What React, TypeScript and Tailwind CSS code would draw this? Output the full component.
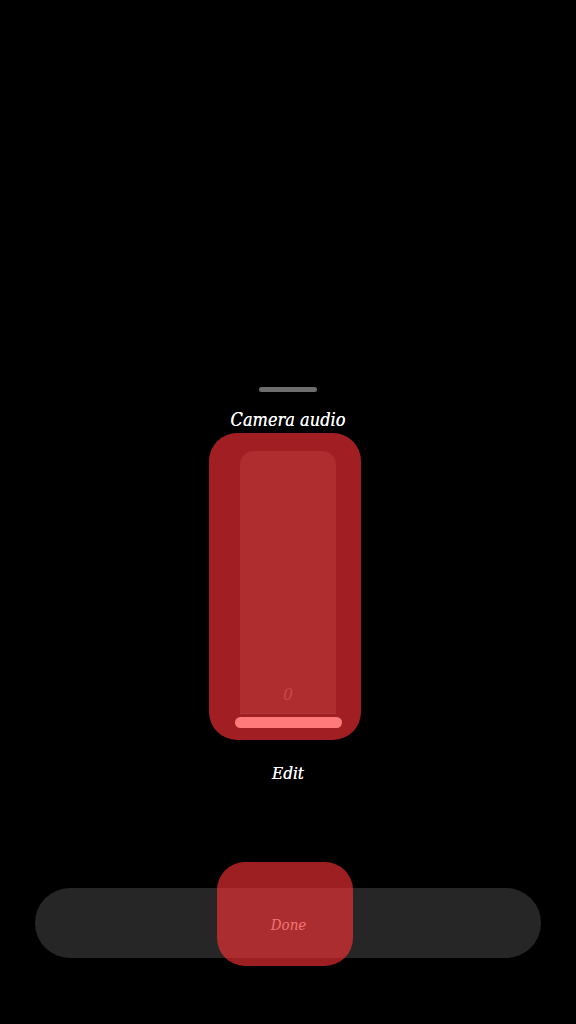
import React from 'react';

const serif = { fontFamily: '"DejaVu Serif", "Liberation Serif", serif', fontStretch: 'condensed' as const };

/** Vertical level slider shown in the audio sheet. */
function LevelSlider({ value }: { value: number }) {
  return (
    <div className="flex h-[307px] w-[152px] flex-col rounded-[28px] bg-[#a11f22] pb-[12px] pl-[26px] pr-[19px] pt-[18px]">
      <div className="ml-[5px] flex w-[96px] flex-1 flex-col items-center justify-end rounded-t-[14px] border-b border-dotted border-[#c4484a]/60 bg-[#b02d2f] pb-[10px]">
        <span className="text-[17px] italic leading-none text-[#c9494b]" style={serif}>
          {value}
        </span>
      </div>
      <div className="mt-[3px] h-[11px] w-[107px] rounded-full bg-[#ff7b7b]" />
    </div>
  );
}

export default function App() {
  return (
    <div className="flex h-[1024px] w-full flex-col items-center bg-black pt-[387px]" style={serif}>
      {/* Sheet grabber */}
      <div className="h-[5px] w-[58px] rounded-full bg-[#6e6e6e]" />

      <h1 className="mt-[16px] text-[18px] italic leading-[24px] text-white [text-shadow:0_0_0.4px_white]" style={serif}>
        Camera audio
      </h1>

      <div className="mt-[1px] mr-[6px]">
        <LevelSlider value={0} />
      </div>

      <p className="mt-[21px] text-[17px] italic leading-[24px] text-white [text-shadow:0_0_0.4px_white]" style={serif}>
        Edit
      </p>

      {/* Bottom action bar */}
      <div className="relative mt-[103px] flex h-[70px] w-[506px] items-center justify-center rounded-full bg-[#262626]">
        <button
          className="absolute left-[182px] top-[-26px] flex h-[104px] w-[136px] items-center justify-center rounded-[28px] bg-[rgba(255,50,53,0.62)]"
          style={serif}
        >
          <span className="ml-[7px] mt-[22px] text-[15px] italic text-[#f27475]">Done</span>
        </button>
      </div>
    </div>
  );
}
